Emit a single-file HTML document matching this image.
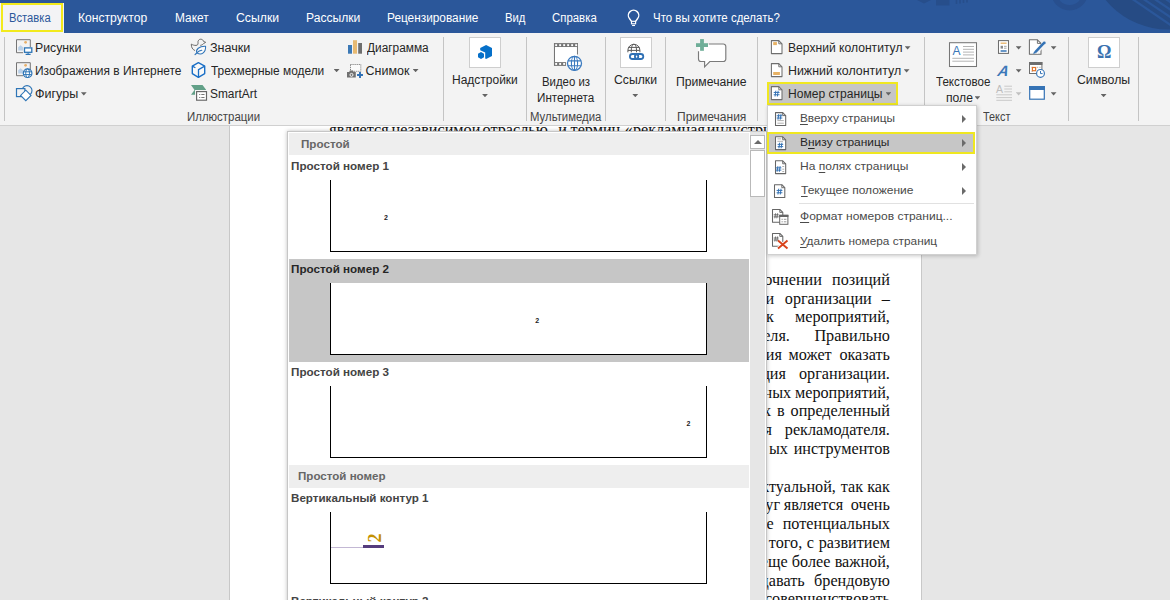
<!DOCTYPE html>
<html lang="ru"><head><meta charset="utf-8"><title>Word</title>
<style>
html,body{margin:0;padding:0}
body{width:1170px;height:600px;overflow:hidden;position:relative;background:#e6e6e6;font-family:"Liberation Sans",sans-serif}
.t{position:absolute;white-space:pre;line-height:1}
.a{position:absolute}
.sep{position:absolute;top:37px;width:1px;height:84px;background:#c4c4c4}
.box{position:absolute;background:#fff;border:1px solid #cecece;box-sizing:border-box}
.dn{position:absolute;width:5.8px;height:3.3px;background:#636363;clip-path:polygon(0 0,100% 0,50% 100%);margin:-.3px 0 0 -.3px}
.rt{position:absolute;width:0;height:0;border-top:4px solid transparent;border-bottom:4px solid transparent;border-left:4.6px solid #6a6a6a}
u{text-decoration:underline;text-underline-offset:1.5px;text-decoration-thickness:1px}
svg{position:absolute;overflow:visible}
</style></head><body>
<div class="a" style="left:0;top:0;width:1170px;height:32.500px;background:#2b579a;overflow:hidden"><svg style="left:0;top:0" width="1170" height="32" viewBox="0 0 1170 32"><circle cx="1168" cy="-51" r="80.500" fill="#264b84"/><path d="M1128 -4L1172 26M1136 -6L1176 21M1144 -8L1180 16M1152 -10L1184 11" stroke="#2b579a" stroke-width="2.200"/><circle cx="1069.600" cy="-8" r="15.700" fill="none" stroke="#284f8e" stroke-width="5.500"/><rect x="936" y="-2" width="13.500" height="7.500" fill="#274e8b"/><path d="M917 0H931L924 3.500z" fill="#274e8b"/><path d="M956.500 0V4M960 0V3.500M963.500 0V3M967 0V2.500" stroke="#274e8b" stroke-width="1.600"/></svg></div>
<div class="a" style="left:0;top:3px;width:64px;height:30px;background:#f3f3f3"></div>
<div class="a" style="left:1px;top:2.900px;width:62.300px;height:29.100px;background:#f3f3f5;border:2px solid #f2ea1c;box-sizing:border-box"></div>
<span class="t" style="left:9.10px;top:12.00px;font:400 12.5px/1 'Liberation Sans',sans-serif;color:#2b579a;transform:scaleX(0.8956);transform-origin:0 50%;">Вставка</span>
<span class="t" style="left:78.03px;top:12.00px;font:400 12.5px/1 'Liberation Sans',sans-serif;color:#ffffff;transform:scaleX(0.9700);transform-origin:0 50%;">Конструктор</span>
<span class="t" style="left:175.05px;top:12.00px;font:400 12.5px/1 'Liberation Sans',sans-serif;color:#ffffff;transform:scaleX(0.9500);transform-origin:0 50%;">Макет</span>
<span class="t" style="left:236.02px;top:12.00px;font:400 12.5px/1 'Liberation Sans',sans-serif;color:#ffffff;transform:scaleX(0.9786);transform-origin:0 50%;">Ссылки</span>
<span class="t" style="left:306.03px;top:12.00px;font:400 12.5px/1 'Liberation Sans',sans-serif;color:#ffffff;transform:scaleX(0.9685);transform-origin:0 50%;">Рассылки</span>
<span class="t" style="left:386.85px;top:12.00px;font:400 12.5px/1 'Liberation Sans',sans-serif;color:#ffffff;transform:scaleX(0.9474);transform-origin:0 50%;">Рецензирование</span>
<span class="t" style="left:504.70px;top:12.00px;font:400 12.5px/1 'Liberation Sans',sans-serif;color:#ffffff;transform:scaleX(0.9048);transform-origin:0 50%;">Вид</span>
<span class="t" style="left:552.29px;top:12.00px;font:400 12.5px/1 'Liberation Sans',sans-serif;color:#ffffff;transform:scaleX(0.9125);transform-origin:0 50%;">Справка</span>
<span class="t" style="left:652.98px;top:12.00px;font:400 12.5px/1 'Liberation Sans',sans-serif;color:#ffffff;transform:scaleX(0.9175);transform-origin:0 50%;">Что вы хотите сделать?</span>
<svg style="left:0;top:0" width="700" height="32" viewBox="0 0 700 32"><path d="M631.500 21.300L629.600 18.780A5.200 5.200 0 1 1 637.500 18.780L635.600 21.300" stroke-linejoin="round" fill="none" stroke="#fff" stroke-width="1.400"/><rect x="631.500" y="21.300" width="4.100" height="2.500" fill="none" stroke="#fff" stroke-width="1.150"/><path d="M632.100 25.500H635" stroke="#fff" stroke-width="1.100"/></svg>
<div class="a" style="left:0;top:32.500px;width:1170px;height:92.500px;background:#f3f3f3;border-bottom:1px solid #d0d0d0"></div>
<div class="sep" style="left:4.2px"></div>
<div class="sep" style="left:443.2px"></div>
<div class="sep" style="left:526px"></div>
<div class="sep" style="left:605px"></div>
<div class="sep" style="left:665.4px"></div>
<div class="sep" style="left:757.2px"></div>
<div class="sep" style="left:924.3px"></div>
<div class="sep" style="left:1068px"></div>
<div class="sep" style="left:1138.3px"></div>
<span class="t" style="left:34.92px;top:42.00px;font:400 12.5px/1 'Liberation Sans',sans-serif;color:#262626;transform:scaleX(0.9800);transform-origin:0 50%;">Рисунки</span>
<span class="t" style="left:34.95px;top:65.00px;font:400 12.5px/1 'Liberation Sans',sans-serif;color:#262626;transform:scaleX(0.9539);transform-origin:0 50%;">Изображения в Интернете</span>
<span class="t" style="left:34.90px;top:88.00px;font:400 12.5px/1 'Liberation Sans',sans-serif;color:#262626;transform:scaleX(1.0024);transform-origin:0 50%;">Фигуры</span>
<div class="dn" style="left:81.2px;top:92.5px"></div>
<span class="t" style="left:209.59px;top:42.00px;font:400 12.5px/1 'Liberation Sans',sans-serif;color:#262626;transform:scaleX(1.0079);transform-origin:0 50%;">Значки</span>
<span class="t" style="left:210.60px;top:65.00px;font:400 12.5px/1 'Liberation Sans',sans-serif;color:#262626;transform:scaleX(0.9517);transform-origin:0 50%;">Трехмерные модели</span>
<div class="dn" style="left:334px;top:69.2px"></div>
<span class="t" style="left:209.65px;top:88.00px;font:400 12.5px/1 'Liberation Sans',sans-serif;color:#262626;transform:scaleX(0.9521);transform-origin:0 50%;">SmartArt</span>
<span class="t" style="left:366.60px;top:42.00px;font:400 12.5px/1 'Liberation Sans',sans-serif;color:#262626;transform:scaleX(0.9492);transform-origin:0 50%;">Диаграмма</span>
<span class="t" style="left:365.60px;top:65.00px;font:400 12.5px/1 'Liberation Sans',sans-serif;color:#262626;transform:scaleX(1.0000);transform-origin:0 50%;">Снимок</span>
<div class="dn" style="left:413px;top:69.2px"></div>
<span class="t" style="left:186.89px;top:111.00px;font:400 12.5px/1 'Liberation Sans',sans-serif;color:#444444;transform:scaleX(0.9141);transform-origin:0 50%;">Иллюстрации</span>
<div class="box" style="left:469px;top:37px;width:32px;height:31px"></div>
<span class="t" style="left:452.14px;top:74.00px;font:400 12.5px/1 'Liberation Sans',sans-serif;color:#262626;transform:scaleX(0.9597);transform-origin:0 50%;">Надстройки</span>
<div class="dn" style="left:482.4px;top:94.2px"></div>
<span class="t" style="left:542.19px;top:76.00px;font:400 12.5px/1 'Liberation Sans',sans-serif;color:#262626;transform:scaleX(0.9118);transform-origin:0 50%;">Видео из</span>
<span class="t" style="left:537.17px;top:92.00px;font:400 12.5px/1 'Liberation Sans',sans-serif;color:#262626;transform:scaleX(0.9333);transform-origin:0 50%;">Интернета</span>
<span class="t" style="left:530.49px;top:111.00px;font:400 12.5px/1 'Liberation Sans',sans-serif;color:#444444;transform:scaleX(0.9078);transform-origin:0 50%;">Мультимедиа</span>
<div class="box" style="left:620px;top:37px;width:32px;height:31px"></div>
<span class="t" style="left:614.32px;top:74.00px;font:400 12.5px/1 'Liberation Sans',sans-serif;color:#262626;transform:scaleX(0.9762);transform-origin:0 50%;">Ссылки</span>
<div class="dn" style="left:632.7px;top:94.2px"></div>
<span class="t" style="left:676.32px;top:76.00px;font:400 12.5px/1 'Liberation Sans',sans-serif;color:#262626;transform:scaleX(0.9761);transform-origin:0 50%;">Примечание</span>
<span class="t" style="left:677.14px;top:111.00px;font:400 12.5px/1 'Liberation Sans',sans-serif;color:#444444;transform:scaleX(0.9614);transform-origin:0 50%;">Примечания</span>
<span class="t" style="left:787.93px;top:42.00px;font:400 12.5px/1 'Liberation Sans',sans-serif;color:#262626;transform:scaleX(0.9690);transform-origin:0 50%;">Верхний колонтитул</span>
<div class="dn" style="left:905px;top:46.5px"></div>
<span class="t" style="left:787.91px;top:65.00px;font:400 12.5px/1 'Liberation Sans',sans-serif;color:#262626;transform:scaleX(0.9911);transform-origin:0 50%;">Нижний колонтитул</span>
<div class="dn" style="left:904px;top:69.5px"></div>
<div class="a" style="left:766.5px;top:82px;width:131px;height:23px;background:#c6c6c6;border:2px solid #f0e821;box-sizing:border-box"></div>
<span class="t" style="left:787.93px;top:88.00px;font:400 12.5px/1 'Liberation Sans',sans-serif;color:#262626;transform:scaleX(0.9656);transform-origin:0 50%;">Номер страницы</span>
<div class="dn" style="left:885.8px;top:92.5px"></div>
<span class="t" style="left:935.90px;top:76.00px;font:400 12.5px/1 'Liberation Sans',sans-serif;color:#262626;transform:scaleX(0.9259);transform-origin:0 50%;">Текстовое</span>
<span class="t" style="left:945.53px;top:92.00px;font:400 12.5px/1 'Liberation Sans',sans-serif;color:#262626;transform:scaleX(0.9731);transform-origin:0 50%;">поле</span>
<div class="dn" style="left:974.8px;top:96.5px"></div>
<span class="t" style="left:982.60px;top:111.00px;font:400 12.5px/1 'Liberation Sans',sans-serif;color:#444444;transform:scaleX(0.8710);transform-origin:0 50%;">Текст</span>
<div class="dn" style="left:1016px;top:46.5px"></div>
<div class="dn" style="left:1016px;top:69.5px"></div>
<div class="dn" style="left:1016px;top:92.5px;background:#c0c0c0"></div>
<div class="dn" style="left:1051px;top:46.5px"></div>
<div class="dn" style="left:1051px;top:92.5px"></div>
<div class="box" style="left:1088px;top:37px;width:32px;height:31px"></div>
<span class="t" style="left:1077.02px;top:74.00px;font:400 12.5px/1 'Liberation Sans',sans-serif;color:#262626;transform:scaleX(0.9827);transform-origin:0 50%;">Символы</span>
<div class="dn" style="left:1101px;top:94.2px"></div>
<svg style="left:0;top:0" width="1170" height="126" viewBox="0 0 1170 126"><path d="M30.3 47V39.7H16.5V52.7H23" fill="none" stroke="#757575" stroke-width="1"/><circle cx="25.6" cy="42.3" r="1.35" fill="#e8b06a"/><path d="M18.2 50.6V47.3L20.6 45.2L23 47.3V50.6z" fill="#b9d0e8"/><rect x="24.500" y="47.900" width="7.300" height="4.400" fill="#fff" stroke="#2e75b6" stroke-width="1.300"/><path d="M28.100 52.400V54.200M25.600 54.400H30.600" stroke="#2e75b6" stroke-width="1.100" fill="none"/><path d="M30.3 70V62.7H16.5V75.7H23" fill="none" stroke="#757575" stroke-width="1"/><circle cx="25.6" cy="65.3" r="1.35" fill="#e8b06a"/><path d="M18.2 73.6V70.3L20.6 68.2L23 70.3V73.6z" fill="#b9d0e8"/><circle cx="27.600" cy="73.200" r="4.300" fill="#fff" stroke="#2e75b6" stroke-width="1.200"/><ellipse cx="27.600" cy="73.200" rx="1.900" ry="4.300" fill="none" stroke="#2e75b6" stroke-width="1"/><path d="M23.500 71.800H31.700M23.500 74.600H31.700" stroke="#2e75b6" stroke-width="1"/><circle cx="27" cy="90.600" r="5" fill="none" stroke="#2e75b6" stroke-width="1.100"/><rect x="16.500" y="88.600" width="8.400" height="8" fill="#f3f3f3" stroke="#2e75b6" stroke-width="1.200"/><path d="M25.800 90.200L31 95.400L25.800 100.600L20.600 95.400z" fill="#fff" stroke="#2e75b6" stroke-width="1.100"/><path d="M194.600 50.400C192.300 49.300 191.300 47.300 191.300 44.100C192.800 45 194.400 45.500 196 45.400C197.600 45.300 198.200 44.400 198 42.800C197.700 40.800 198.900 39.200 200.700 39.200C202.200 39.200 203.300 40.200 203.600 41.500L205.700 42.300L203.400 43.700C202.900 44.500 202 45 200.700 45.300" fill="none" stroke="#6a6a6a" stroke-width="1" stroke-linejoin="round" stroke-linecap="round"/><path d="M195 54.700C195.600 54 196.200 53.500 196.900 52.900C195.300 49.600 199.200 46 205.600 46.300C205.900 52.100 201.800 56 196.900 52.900C198.100 51.600 199.800 50.500 201.800 50.300" fill="#fbfbfb" stroke="#2f74b8" stroke-width="1.050" stroke-linejoin="round" stroke-linecap="round"/><path d="M198.400 62.600L204.700 66.100V73.600L198.400 77.300L192.300 73.600V66.100z" fill="#f8f8f8" stroke="#1a6fc6" stroke-width="1.400" stroke-linejoin="round"/><path d="M192.300 66.100L195.400 67.800M204.700 66.100L198.500 69.600V77.300" fill="none" stroke="#1a6fc6" stroke-width="1.300"/><path d="M191 85H202.500L206.100 89.700L202.500 94.800H191L194.500 89.900z" fill="#62a088"/><rect x="195" y="90" width="13" height="11.500" fill="#f3f3f3"/><rect x="196.600" y="91.600" width="9.900" height="8.600" fill="#fff" stroke="#666" stroke-width="1.150"/><path d="M199.200 94.500h1.100M201.300 94.500h3.200M199.200 97.500h1.100M201.300 97.500h3.200" stroke="#777" stroke-width="1"/><rect x="348" y="45" width="4" height="8.700" fill="#3b78b5"/><rect x="353" y="40.200" width="4" height="13.500" fill="#e8ba72"/><rect x="358.200" y="43" width="3.800" height="10.700" fill="#6e6e6e"/><rect x="350.500" y="64.500" width="10.300" height="6.800" fill="#fafafa" stroke="#6e6e6e" stroke-width="1" stroke-dasharray="1 1.060"/><path d="M347 72H349.200L349.900 70.500H353L353.700 72H355.800V77.600H347z" fill="#707070"/><circle cx="351.500" cy="74.900" r="1.500" fill="#707070" stroke="#fff" stroke-width=".9"/><path d="M360 72.100V78M357.050 75.050H362.950" stroke="#2e6fb4" stroke-width="1.900"/><path d="M486.100 45.100L492 48V55.900L486.100 59L485.200 58.500V52.500L480.200 50.200V48z" fill="#0670c9"/><path d="M481 52.100L484 53.800V57.300L481 59L478 57.300V53.800z" fill="#0670c9"/></svg>
<svg style="left:0;top:0" width="1170" height="126" viewBox="0 0 1170 126"><path d="M554.500 43.100V65.800M577.400 43.100V54.600" stroke="#757575" stroke-width="1.100"/><rect x="554" y="43.100" width="24" height="4" fill="#757575"/><rect x="554" y="62" width="12" height="3.900" fill="#757575"/><rect x="555" y="47.100" width="21.900" height="15" fill="#fff"/><rect x="555.2" y="44.200" width="1.900" height="1.900" fill="#fff"/><rect x="559.2" y="44.200" width="1.900" height="1.900" fill="#fff"/><rect x="563.2" y="44.200" width="1.900" height="1.900" fill="#fff"/><rect x="567.2" y="44.200" width="1.900" height="1.900" fill="#fff"/><rect x="571.2" y="44.200" width="1.900" height="1.900" fill="#fff"/><rect x="575.2" y="44.200" width="1.900" height="1.900" fill="#fff"/><rect x="555.2" y="63" width="1.900" height="1.900" fill="#fff"/><rect x="559.2" y="63" width="1.900" height="1.900" fill="#fff"/><rect x="563.2" y="63" width="1.900" height="1.900" fill="#fff"/><circle cx="574.500" cy="63.300" r="7" fill="#fff" stroke="#3b7abf" stroke-width="1.300"/><ellipse cx="574.500" cy="63.300" rx="3.100" ry="7" fill="none" stroke="#3b7abf" stroke-width="1.100"/><path d="M567.800 60.900H581.200M567.800 65.700H581.200M574.500 56.300V70.300" stroke="#3b7abf" stroke-width="1.100"/><path d="M627.900 52.300V50.300A6 6 0 0 1 639.900 50.300V52.300M631.300 52.300V50.300C631.300 46.500 632.500 44.300 633.900 44.300S636.500 46.500 636.500 50.300V52.300M628.300 47.400H639.500M627.900 50.400H639.900" fill="none" stroke="#5a5a5a" stroke-width="1"/><rect x="629.900" y="54" width="8.400" height="5" rx="2.500" fill="none" stroke="#2e6fb4" stroke-width="1.800"/><rect x="634.900" y="54" width="8.400" height="5" rx="2.500" fill="none" stroke="#2e6fb4" stroke-width="1.800"/><path d="M701 44H723.300A2.500 2.500 0 0 1 725.800 46.500V59A2.500 2.500 0 0 1 723.300 61.500H709.800L704.600 66.800V61.500H701A2.500 2.500 0 0 1 698.500 59V46.500A2.500 2.500 0 0 1 701 44z" fill="#fff"/><path d="M708.800 44H723.300A2.500 2.500 0 0 1 725.800 46.500V59A2.500 2.500 0 0 1 723.300 61.500H709.800L704.600 66.800V61.500H701A2.500 2.500 0 0 1 698.500 59V51.300" fill="none" stroke="#7a7a7a" stroke-width="1.150"/><rect x="700.100" y="39.100" width="3.800" height="11.700" fill="#6fae98"/><rect x="696" y="43.200" width="12" height="3.800" fill="#6fae98"/></svg>
<svg style="left:0;top:0" width="1170" height="126" viewBox="0 0 1170 126"><path d="M771.4 40.6H778.8L782.0 43.800000000000004V53.6H771.4z" fill="#fff" stroke="#6e6e6e" stroke-width="1.05" stroke-linejoin="round"/><path d="M778.8 40.6V43.800000000000004H782.0" fill="none" stroke="#6e6e6e" stroke-width="0.95"/><rect x="773.200" y="42.100" width="3.700" height="3" fill="#e8b264"/><path d="M771.4 63.6H778.8L782.0 66.8V76.6H771.4z" fill="#fff" stroke="#6e6e6e" stroke-width="1.05" stroke-linejoin="round"/><path d="M778.8 63.6V66.8H782.0" fill="none" stroke="#6e6e6e" stroke-width="0.95"/><rect x="773.200" y="72" width="6.700" height="3" fill="#e8b264"/><path d="M771.4 86.6H778.8L782.0 89.8V99.6H771.4z" fill="#fff" stroke="#6e6e6e" stroke-width="1.05" stroke-linejoin="round"/><path d="M778.8 86.6V89.8H782.0" fill="none" stroke="#6e6e6e" stroke-width="0.95"/><path d="M775.84 90.69999999999999L775.0400000000001 96.5M778.16 90.69999999999999L777.36 96.5M773.7 92.44H779.5M773.7 94.75999999999999H779.5" stroke="#3573b5" stroke-width="1.0" fill="none"/><rect x="949.500" y="42.700" width="27" height="23.800" fill="#fff" stroke="#777" stroke-width="1.050"/><path d="M963 46.500H974M963 49.300H974M963 52.100H974M963 54.900H974M952.300 58.300H974M952.300 61.200H974" stroke="#b4b4b4" stroke-width="1"/><text x="952.400" y="54.900" font-family="Liberation Sans,sans-serif" font-size="12" fill="#3c78b8">A</text><rect x="998.500" y="40.600" width="10" height="12.800" fill="#fff" stroke="#6e6e6e" stroke-width="1.050"/><path d="M1000.600 43.200H1006.600" stroke="#e8b264" stroke-width="1.300"/><rect x="1000.600" y="45.800" width="2.400" height="2.800" fill="#8a8a8a"/><path d="M1004 46.300H1006.600M1004 48.200H1006.600" stroke="#9a9a9a" stroke-width=".9"/><path d="M1000.600 51H1006.600" stroke="#3573b5" stroke-width="1.500"/><text x="0" y="0" font-family="Liberation Sans,sans-serif" font-size="15" font-weight="700" font-style="italic" fill="#3c78b8" transform="translate(997 75.700) skewX(-12)">A</text><text x="996" y="92.800" font-family="Liberation Sans,sans-serif" font-size="10.500" fill="#bdbdbd">A</text><path d="M1004.300 86.200H1012M1004.300 89H1012M1004.300 91.800H1012M996.300 94.800H1012M996.300 97.600H1012M996.300 100.300H1012" stroke="#c9c9c9" stroke-width="1"/><path d="M1029.4 39.8H1037.4L1041.0 43.4V54.199999999999996H1029.4z" fill="#fff" stroke="#6e6e6e" stroke-width="1.05" stroke-linejoin="round"/><path d="M1037.4 39.8V43.4H1041.0" fill="none" stroke="#6e6e6e" stroke-width="0.95"/><path d="M1036 52.500L1044.300 43.300" stroke="#f3f3f3" stroke-width="4.200"/><path d="M1035.800 51.600L1043.300 43.700" stroke="#3573b5" stroke-width="2.500" stroke-linecap="round"/><path d="M1033.200 54L1034.100 51.300L1036 52.900z" fill="#3573b5"/><circle cx="1044.300" cy="42.900" r="1.400" fill="#3573b5"/><rect x="1029.500" y="62.500" width="12.400" height="11" fill="#fff" stroke="#6e6e6e" stroke-width="1"/><rect x="1029" y="62" width="13.400" height="3" fill="#6e6e6e"/><path d="M1031.500 67.300h1.400M1036.800 67.300h1.400M1039.300 67.300h1.400M1031.500 71.400h1.400" stroke="#b4b4b4" stroke-width="1"/><rect x="1032.400" y="67.500" width="3.200" height="3.200" fill="#fff" stroke="#e0742a" stroke-width="1.200"/><circle cx="1040.500" cy="73.400" r="3.900" fill="#fff" stroke="#3573b5" stroke-width="1.150"/><path d="M1040.500 71V73.600H1042.600" fill="none" stroke="#3573b5" stroke-width="1"/><rect x="1029.700" y="86.600" width="14.600" height="12.600" fill="#fff" stroke="#3573b5" stroke-width="1.200"/><rect x="1029.100" y="86" width="15.800" height="4" fill="#3573b5"/></svg>
<span class="t" style="left:1097px;top:42.500px;font:700 18px/1 'Liberation Serif',serif;color:#3a72b0">Ω</span>
<div class="a" style="left:229px;top:126px;width:693px;height:474px;background:#fff;border-left:1px solid #c8c8c8;border-right:1px solid #c8c8c8;box-sizing:border-box"></div>
<div class="a" style="left:300px;top:126px;width:480px;height:6px;overflow:hidden">
<span class="t" style="left:29.20px;top:-4.00px;font:400 16.2px/1 'Liberation Serif',serif;color:#111111;">является</span>
<span class="t" style="left:91.60px;top:-4.00px;font:400 16.2px/1 'Liberation Serif',serif;color:#111111;">независимой</span>
<span class="t" style="left:182.60px;top:-4.00px;font:400 16.2px/1 'Liberation Serif',serif;color:#111111;">отраслью,</span>
<span class="t" style="left:258.30px;top:-4.00px;font:400 16.2px/1 'Liberation Serif',serif;color:#111111;">и</span>
<span class="t" style="left:270.60px;top:-4.00px;font:400 16.2px/1 'Liberation Serif',serif;color:#111111;">термин</span>
<span class="t" style="left:324.80px;top:-4.00px;font:400 16.2px/1 'Liberation Serif',serif;color:#111111;">«рекламная</span>
<span class="t" style="left:406.80px;top:-4.00px;font:400 16.2px/1 'Liberation Serif',serif;color:#111111;">индустрия»</span>
</div>
<span class="t" style="right:348.10px;top:272.00px;font:400 16.2px/1 'Liberation Serif',serif;color:#111111;">уточнении</span>
<span class="t" style="right:280.10px;top:272.00px;font:400 16.2px/1 'Liberation Serif',serif;color:#111111;">позиций</span>
<span class="t" style="right:395.80px;top:291.00px;font:400 16.2px/1 'Liberation Serif',serif;color:#111111;">и</span>
<span class="t" style="left:784.80px;top:291.00px;font:400 16.2px/1 'Liberation Serif',serif;color:#111111;">организации</span>
<span class="t" style="right:280.10px;top:291.00px;font:400 16.2px/1 'Liberation Serif',serif;color:#111111;">–</span>
<span class="t" style="right:396.10px;top:309.00px;font:400 16.2px/1 'Liberation Serif',serif;color:#111111;">к</span>
<span class="t" style="right:280.10px;top:309.00px;font:400 16.2px/1 'Liberation Serif',serif;color:#111111;">мероприятий,</span>
<span class="t" style="right:380.10px;top:328.00px;font:400 16.2px/1 'Liberation Serif',serif;color:#111111;">рекламодателя.</span>
<span class="t" style="right:280.10px;top:328.00px;font:400 16.2px/1 'Liberation Serif',serif;color:#111111;">Правильно</span>
<span class="t" style="right:388.10px;top:347.00px;font:400 16.2px/1 'Liberation Serif',serif;color:#111111;">ия</span>
<span class="t" style="left:788.50px;top:347.00px;font:400 16.2px/1 'Liberation Serif',serif;color:#111111;">может</span>
<span class="t" style="right:280.10px;top:347.00px;font:400 16.2px/1 'Liberation Serif',serif;color:#111111;">оказать</span>
<span class="t" style="right:384.10px;top:366.00px;font:400 16.2px/1 'Liberation Serif',serif;color:#111111;">ция</span>
<span class="t" style="right:280.10px;top:366.00px;font:400 16.2px/1 'Liberation Serif',serif;color:#111111;">организации.</span>
<span class="t" style="right:378.80px;top:385.00px;font:400 16.2px/1 'Liberation Serif',serif;color:#111111;">ных</span>
<span class="t" style="right:280.10px;top:385.00px;font:400 16.2px/1 'Liberation Serif',serif;color:#111111;">мероприятий,</span>
<span class="t" style="right:398.80px;top:403.00px;font:400 16.2px/1 'Liberation Serif',serif;color:#111111;">х</span>
<span class="t" style="left:777.10px;top:403.00px;font:400 16.2px/1 'Liberation Serif',serif;color:#111111;">в</span>
<span class="t" style="right:280.10px;top:403.00px;font:400 16.2px/1 'Liberation Serif',serif;color:#111111;">определенный</span>
<span class="t" style="right:398.10px;top:422.00px;font:400 16.2px/1 'Liberation Serif',serif;color:#111111;">я</span>
<span class="t" style="right:280.10px;top:422.00px;font:400 16.2px/1 'Liberation Serif',serif;color:#111111;">рекламодателя.</span>
<span class="t" style="right:382.10px;top:441.00px;font:400 16.2px/1 'Liberation Serif',serif;color:#111111;">ых</span>
<span class="t" style="right:280.10px;top:441.00px;font:400 16.2px/1 'Liberation Serif',serif;color:#111111;">инструментов</span>
<span class="t" style="right:334.10px;top:479.00px;font:400 16.2px/1 'Liberation Serif',serif;color:#111111;">актуальной,</span>
<span class="t" style="left:840.80px;top:479.00px;font:400 16.2px/1 'Liberation Serif',serif;color:#111111;">так</span>
<span class="t" style="right:280.10px;top:479.00px;font:400 16.2px/1 'Liberation Serif',serif;color:#111111;">как</span>
<span class="t" style="right:389.90px;top:497.00px;font:400 16.2px/1 'Liberation Serif',serif;color:#111111;">услуг</span>
<span class="t" style="left:783.70px;top:497.00px;font:400 16.2px/1 'Liberation Serif',serif;color:#111111;">является</span>
<span class="t" style="right:280.10px;top:497.00px;font:400 16.2px/1 'Liberation Serif',serif;color:#111111;">очень</span>
<span class="t" style="right:396.40px;top:516.00px;font:400 16.2px/1 'Liberation Serif',serif;color:#111111;">е</span>
<span class="t" style="right:280.10px;top:516.00px;font:400 16.2px/1 'Liberation Serif',serif;color:#111111;">потенциальных</span>
<span class="t" style="right:367.80px;top:535.00px;font:400 16.2px/1 'Liberation Serif',serif;color:#111111;">того,</span>
<span class="t" style="left:806.80px;top:535.00px;font:400 16.2px/1 'Liberation Serif',serif;color:#111111;">с</span>
<span class="t" style="right:280.10px;top:535.00px;font:400 16.2px/1 'Liberation Serif',serif;color:#111111;">развитием</span>
<span class="t" style="right:382.40px;top:554.00px;font:400 16.2px/1 'Liberation Serif',serif;color:#111111;">еще</span>
<span class="t" style="left:791.80px;top:554.00px;font:400 16.2px/1 'Liberation Serif',serif;color:#111111;">более</span>
<span class="t" style="right:280.10px;top:554.00px;font:400 16.2px/1 'Liberation Serif',serif;color:#111111;">важной,</span>
<span class="t" style="right:365.40px;top:573.00px;font:400 16.2px/1 'Liberation Serif',serif;color:#111111;">создавать</span>
<span class="t" style="right:280.10px;top:573.00px;font:400 16.2px/1 'Liberation Serif',serif;color:#111111;">брендовую</span>
<span class="t" style="right:280.10px;top:591.00px;font:400 16.2px/1 'Liberation Serif',serif;color:#111111;">совершенствовать</span>
<div class="a" style="left:287px;top:131px;width:480px;height:480px;background:#fff;border:1px solid #c6c6c6;box-sizing:border-box;box-shadow:0 0 4px rgba(0,0,0,.25)"></div>
<div class="a" style="left:289px;top:133px;width:460px;height:22.400px;background:#eeeeee"></div>
<span class="t" style="left:301.29px;top:139.00px;font:700 11.5px/1 'Liberation Sans',sans-serif;color:#666666;transform:scaleX(1.0130);transform-origin:0 50%;">Простой</span>
<span class="t" style="left:291.29px;top:161.00px;font:700 11.5px/1 'Liberation Sans',sans-serif;color:#444444;transform:scaleX(1.0137);transform-origin:0 50%;">Простой номер 1</span>
<div class="a" style="left:330px;top:180px;width:377px;height:71.500px;background:#fff;border:1px solid #000;border-top:none;box-sizing:border-box"></div>
<div class="a" style="left:289px;top:259px;width:460px;height:102.500px;background:#c6c6c6"></div>
<span class="t" style="left:291.29px;top:264.00px;font:700 11.5px/1 'Liberation Sans',sans-serif;color:#262626;transform:scaleX(1.0137);transform-origin:0 50%;">Простой номер 2</span>
<div class="a" style="left:330px;top:283px;width:377px;height:71.500px;background:#fff;border:1px solid #000;border-top:none;box-sizing:border-box"></div>
<span class="t" style="left:291.29px;top:367.00px;font:700 11.5px/1 'Liberation Sans',sans-serif;color:#444444;transform:scaleX(1.0137);transform-origin:0 50%;">Простой номер 3</span>
<div class="a" style="left:330px;top:386px;width:377px;height:71.500px;background:#fff;border:1px solid #000;border-top:none;box-sizing:border-box"></div>
<span class="t" style="left:384.00px;top:214.00px;font:700 7px/1 'Liberation Sans',sans-serif;color:#222;">2</span>
<span class="t" style="left:535.30px;top:317.00px;font:700 7px/1 'Liberation Sans',sans-serif;color:#222;">2</span>
<span class="t" style="left:686.40px;top:420.00px;font:700 7px/1 'Liberation Sans',sans-serif;color:#222;">2</span>
<div class="a" style="left:289px;top:465.200px;width:460px;height:22.400px;background:#eeeeee"></div>
<span class="t" style="left:298.39px;top:471.00px;font:700 11.5px/1 'Liberation Sans',sans-serif;color:#666666;transform:scaleX(1.0058);transform-origin:0 50%;">Простой номер</span>
<span class="t" style="left:291.29px;top:493.00px;font:700 11.5px/1 'Liberation Sans',sans-serif;color:#444444;transform:scaleX(1.0096);transform-origin:0 50%;">Вертикальный контур 1</span>
<div class="a" style="left:330px;top:512px;width:377px;height:71.500px;background:#fff;border:1px solid #000;border-top:none;box-sizing:border-box"></div>
<div class="a" style="left:331px;top:546.500px;width:33px;height:1px;background:#c3b8d4"></div>
<div class="a" style="left:363px;top:545px;width:20.500px;height:3px;background:#553c7d"></div>
<span class="t" style="left:369.7px;top:529.2px;font:700 18px/1 'Liberation Serif',serif;color:#c49102;transform:rotate(-90deg);transform-origin:50% 50%">2</span>
<span class="t" style="left:291.29px;top:596.00px;font:700 11.5px/1 'Liberation Sans',sans-serif;color:#444444;transform:scaleX(1.0096);transform-origin:0 50%;">Вертикальный контур 2</span>
<div class="a" style="left:750.400px;top:132px;width:15px;height:468px;background:#e6e6e6"></div>
<div class="a" style="left:750.400px;top:135.200px;width:14.400px;height:14px;background:#fff;border:1px solid #b9b9b9;box-sizing:border-box"></div>
<div class="a" style="left:753.600px;top:140.200px;width:0;height:0;border-left:4px solid transparent;border-right:4px solid transparent;border-bottom:4px solid #6a6a6a"></div>
<div class="a" style="left:750.400px;top:150px;width:14.400px;height:47.400px;background:#fff;border:1px solid #b9b9b9;box-sizing:border-box"></div>
<div class="a" style="left:767px;top:105px;width:210.200px;height:150px;background:#fff;border:1px solid #d0d0d0;box-sizing:border-box;box-shadow:1px 1px 4px rgba(0,0,0,.22)"></div>
<div class="a" style="left:766.700px;top:132.200px;width:208.600px;height:22px;background:#c6c6c6;border:2px solid #efe720;box-sizing:border-box"></div>
<span class="t" style="left:799.87px;top:113.00px;font:400 11.5px/1 'Liberation Sans',sans-serif;color:#4a4a4a;transform:scaleX(1.0264);transform-origin:0 50%;"><u>В</u>верху страницы</span>
<span class="t" style="left:799.86px;top:137.00px;font:400 11.5px/1 'Liberation Sans',sans-serif;color:#262626;transform:scaleX(1.0405);transform-origin:0 50%;">В<u>н</u>изу страницы</span>
<span class="t" style="left:799.85px;top:161.00px;font:400 11.5px/1 'Liberation Sans',sans-serif;color:#4a4a4a;transform:scaleX(1.0461);transform-origin:0 50%;">На <u>п</u>олях страницы</span>
<span class="t" style="left:800.90px;top:185.00px;font:400 11.5px/1 'Liberation Sans',sans-serif;color:#4a4a4a;transform:scaleX(1.0439);transform-origin:0 50%;"><u>Т</u>екущее положение</span>
<div class="a" style="left:798.800px;top:203.200px;width:175.500px;height:1px;background:#e1e1e1"></div>
<span class="t" style="left:799.85px;top:211.00px;font:400 11.5px/1 'Liberation Sans',sans-serif;color:#4a4a4a;transform:scaleX(1.0451);transform-origin:0 50%;"><u>Ф</u>ормат номеров страниц...</span>
<span class="t" style="left:799.87px;top:236.00px;font:400 11.5px/1 'Liberation Sans',sans-serif;color:#4a4a4a;transform:scaleX(1.0280);transform-origin:0 50%;"><u>У</u>далить номера страниц</span>
<div class="rt" style="left:962.2px;top:114.5px"></div>
<div class="rt" style="left:962.2px;top:138.5px"></div>
<div class="rt" style="left:962.2px;top:162.6px"></div>
<div class="rt" style="left:962.2px;top:186.7px"></div>
<svg style="left:0;top:0" width="1170" height="260" viewBox="0 0 1170 260"><path d="M775.5 112.6H782.7L785.7 115.6V125.39999999999999H775.5z" fill="#fff" stroke="#666" stroke-width="1.05" stroke-linejoin="round"/><path d="M782.7 112.6V115.6H785.7" fill="none" stroke="#666" stroke-width="0.95"/><path d="M778.78 114.10000000000001L777.98 119.7M781.02 114.10000000000001L780.22 119.7M776.7 115.78H782.3M776.7 118.02000000000001H782.3" stroke="#3573b5" stroke-width="1.0" fill="none"/><path d="M777.400 120.600H783.800M777.400 123.200H783.800" stroke="#b0b0b0" stroke-width="1"/><path d="M775.5 136.8H782.7L785.7 139.8V149.60000000000002H775.5z" fill="#fff" stroke="#666" stroke-width="1.05" stroke-linejoin="round"/><path d="M782.7 136.8V139.8H785.7" fill="none" stroke="#666" stroke-width="0.95"/><path d="M777.400 138.900H781.200M777.400 141.300H783" stroke="#b0b0b0" stroke-width="1"/><path d="M779.68 142.7L778.88 148.3M781.92 142.7L781.12 148.3M777.6 144.38H783.1999999999999M777.6 146.62H783.1999999999999" stroke="#3573b5" stroke-width="1.0" fill="none"/><path d="M775.5 160.8H782.7L785.7 163.8V173.60000000000002H775.5z" fill="#fff" stroke="#666" stroke-width="1.05" stroke-linejoin="round"/><path d="M782.7 160.8V163.8H785.7" fill="none" stroke="#666" stroke-width="0.95"/><path d="M777.88 166.2L777.08 171.8M780.12 166.2L779.32 171.8M775.8000000000001 167.88H781.4M775.8000000000001 170.12H781.4" stroke="#3573b5" stroke-width="1.0" fill="none"/><path d="M782.300 166.500H784.200M782.300 169.200H784.200M782.300 171.500H784.200" stroke="#b0b0b0" stroke-width="1"/><path d="M774.5 184.7H781.8L784.8 187.7V197.5H774.5z" fill="#fff" stroke="#666" stroke-width="1.05" stroke-linejoin="round"/><path d="M781.8 184.7V187.7H784.8" fill="none" stroke="#666" stroke-width="0.95"/><path d="M778.74 188.7L777.94 194.5M781.06 188.7L780.26 194.5M776.6 190.44H782.4M776.6 192.76H782.4" stroke="#3573b5" stroke-width="1.0" fill="none"/><path d="M772.5 209.4H779.8L782.8 212.4V222.20000000000002H772.5z" fill="#fff" stroke="#666" stroke-width="1.05" stroke-linejoin="round"/><path d="M779.8 209.4V212.4H782.8" fill="none" stroke="#666" stroke-width="0.95"/><path d="M775.6 213.3L774.8000000000001 218.3M777.6 213.3L776.8000000000001 218.3M773.7 214.8H778.7M773.7 216.8H778.7" stroke="#666" stroke-width="0.9" fill="none"/><rect x="779.700" y="215.300" width="8.200" height="9" fill="#fff" stroke="#666" stroke-width="1"/><rect x="779.200" y="214.800" width="9.200" height="2.200" fill="#666"/><path d="M781.500 219.300h1.300M783.800 219.300h2.600M781.500 221.800h1.300M783.800 221.800h2.600" stroke="#999" stroke-width="1"/><path d="M772.5 233.4H779.8L782.8 236.4V246.20000000000002H772.5z" fill="#fff" stroke="#666" stroke-width="1.05" stroke-linejoin="round"/><path d="M779.8 233.4V236.4H782.8" fill="none" stroke="#666" stroke-width="0.95"/><path d="M775.6 236.5L774.8000000000001 241.5M777.6 236.5L776.8000000000001 241.5M773.7 238.0H778.7M773.7 240.0H778.7" stroke="#666" stroke-width="0.9" fill="none"/><path d="M778 240.600L787.500 248.600M787.500 240.600L778 248.600" stroke="#fff" stroke-width="3.600"/><path d="M778 240.600L787.500 248.600M787.500 240.600L778 248.600" stroke="#d8431c" stroke-width="1.900"/></svg>
</body></html>
